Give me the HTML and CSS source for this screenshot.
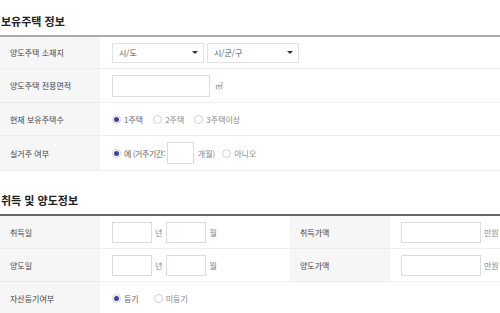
FILE: index.html
```html
<!DOCTYPE html>
<html lang="ko">
<head>
    <meta charset="UTF-8">
    <meta name="viewport" content="width=device-width, initial-scale=1.0">
    <title>양도소득세 계산</title>
    <link rel="stylesheet" href="styles.css">
</head>
<body>
    <section class="section">
        <h2 class="section-title light">보유주택 정보</h2>
        <div class="form-table">
            <div class="row r1">
                <div class="label">양도주택 소재지</div>
                <div class="value">
                    <div class="select"><span>시/도</span><span class="arrow"></span></div>
                    <div class="select"><span>시/군/구</span><span class="arrow"></span></div>
                </div>
            </div>
            <div class="row r2">
                <div class="label">양도주택 전용면적</div>
                <div class="value">
                    <span class="input w-area"></span>
                    <span class="unit">㎡</span>
                </div>
            </div>
            <div class="row r3">
                <div class="label">현재 보유주택수</div>
                <div class="value radios">
                    <label class="radio checked"><span class="dot"></span>1주택</label>
                    <label class="radio"><span class="dot"></span>2주택</label>
                    <label class="radio"><span class="dot"></span>3주택이상</label>
                </div>
            </div>
            <div class="row r4">
                <div class="label">실거주 여부</div>
                <div class="value radios">
                    <label class="radio checked tight"><span class="dot"></span>예 (거주기간:</label>
                    <span class="input w-month"></span>
                    <span class="unit">개월)</span>
                    <label class="radio no"><span class="dot"></span>아니오</label>
                </div>
            </div>
        </div>
    </section>

    <section class="section second">
        <h2 class="section-title">취득 및 양도정보</h2>
        <div class="form-grid">
            <div class="label">취득일</div>
            <div class="value">
                <span class="input w-date"></span><span class="unit">년</span>
                <span class="input w-date"></span><span class="unit">월</span>
            </div>
            <div class="label">취득가액</div>
            <div class="value right">
                <span class="input w-price"></span><span class="unit">만원</span>
            </div>

            <div class="label">양도일</div>
            <div class="value">
                <span class="input w-date"></span><span class="unit">년</span>
                <span class="input w-date"></span><span class="unit">월</span>
            </div>
            <div class="label">양도가액</div>
            <div class="value right">
                <span class="input w-price"></span><span class="unit">만원</span>
            </div>

            <div class="label">자산등기여부</div>
            <div class="value radios wide">
                <label class="radio checked"><span class="dot"></span>등기</label>
                <label class="radio"><span class="dot"></span>미등기</label>
            </div>
        </div>
    </section>
</body>
</html>
```

FILE: styles.css
```css
body {
    margin: 0;
    background: #fff;
    font-family: "Noto Sans CJK KR", "Noto Sans", sans-serif;
    color: #444;
    font-size: 8px;
}
.section-title {
    margin: 0;
    padding: 13px 0 6px 1px;
    font-size: 11px;
    line-height: 16px;
    font-weight: 700;
    color: #222;
    border-bottom: 2px solid #666;
}
.section-title.light {
    border-bottom-color: #aaa;
}
.second {
    margin-top: 12px;
}
.second .section-title {
    padding-top: 9px;
    padding-bottom: 6px;
}
.row {
    display: grid;
    grid-template-columns: 100px 1fr;
    height: 33px;
    border-bottom: 1px solid #ededed;
    box-sizing: border-box;
}
.row.r1 { height: 32px; }
.row.r2 { height: 34px; }
.row.r4 { height: 35px; }
.label {
    display: flex;
    align-items: center;
    padding-left: 10px;
    background: #f6f6f6;
    color: #444;
    white-space: nowrap;
}
.value {
    display: flex;
    align-items: center;
    padding-left: 12px;
    gap: 3px;
    color: #777;
    white-space: nowrap;
}
.select {
    width: 92px;
    height: 20px;
    box-sizing: border-box;
    border: 1px solid #e2e2e2;
    display: flex;
    align-items: center;
    justify-content: space-between;
    padding: 0 5px 0 6px;
    color: #555;
}
.arrow {
    width: 0;
    height: 0;
    border-left: 3px solid transparent;
    border-right: 3px solid transparent;
    border-top: 3px solid #333;
}
.input {
    display: inline-block;
    flex-shrink: 0;
    height: 22px;
    box-sizing: border-box;
    border: 1px solid #dcdcdc;
    background: #fff;
}
.w-area { width: 98px; }
.w-month { width: 27px; }
.w-date { width: 40px; height: 21px; }
.w-price { width: 80px; height: 21px; }
.unit {
    color: #888;
    margin-left: 2px;
    margin-right: 6px;
}
.radios {
    gap: 10px;
}
.radio {
    display: flex;
    align-items: center;
    gap: 3px;
    color: #888;
}
.radio.tight {
    letter-spacing: -0.4px;
}
.radio .dot {
    width: 9px;
    height: 9px;
    box-sizing: border-box;
    border: 1px solid #d0d0d0;
    border-radius: 50%;
    background: #fff;
    display: flex;
    align-items: center;
    justify-content: center;
}
.radio.checked .dot::after {
    content: "";
    width: 5px;
    height: 5px;
    border-radius: 50%;
    background: #3e4299;
}
.radio.checked {
    color: #666;
}
.r4 .radios {
    gap: 0;
}
.r4 .w-month {
    margin-left: 2px;
}
.r4 .unit {
    margin-left: 4px;
    margin-right: 7px;
}
.form-grid {
    display: grid;
    grid-template-columns: 100px 190px 100px 1fr;
    grid-auto-rows: 33px;
}
.form-grid > div {
    border-bottom: 1px solid #ededed;
}
.form-grid .value .unit {
    margin-left: 0;
    margin-right: 1px;
}
.form-grid .value.right {
    padding-left: 11px;
}
.form-grid .wide {
    grid-column: span 3;
    gap: 15px;
}
```
